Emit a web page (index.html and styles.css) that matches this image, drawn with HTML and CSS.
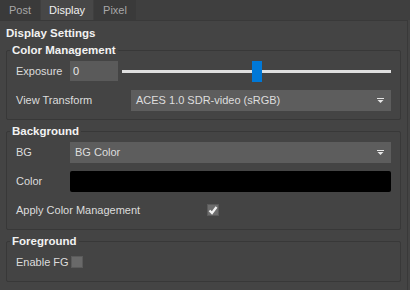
FILE: index.html
```html
<!DOCTYPE html>
<html lang="en">
<head>
    <meta charset="UTF-8">
    <meta name="viewport" content="width=device-width, initial-scale=1.0">
    <title>Display Settings</title>
    <link rel="stylesheet" href="styles.css">
</head>
<body>

<div class="tabs">
    <div class="tab">Post</div>
    <div class="tab active">Display</div>
    <div class="tab">Pixel</div>
</div>

<div class="panel">
    <div class="heading">Display Settings</div>

    <fieldset class="group">
        <legend>Color Management</legend>
        <div class="row">
            <label class="lbl-short">Exposure</label>
            <input class="num" type="text" value="0">
            <div class="slider">
                <div class="track"></div>
                <div class="handle" style="left: calc(50% - 5px);"></div>
            </div>
        </div>
        <div class="row">
            <label class="lbl-wide">View Transform</label>
            <div class="combo">
                <span>ACES 1.0 SDR-video (sRGB)</span>
                <svg class="arrow" width="7" height="5" viewBox="0 0 7 5">
                    <rect x="0" y="0" width="7" height="1" fill="#e6e6e6"/>
                    <polygon points="0.5,2 6.5,2 3.5,5" fill="#e6e6e6"/>
                </svg>
            </div>
        </div>
    </fieldset>

    <fieldset class="group">
        <legend>Background</legend>
        <div class="row">
            <label class="lbl-short">BG</label>
            <div class="combo">
                <span>BG Color</span>
                <svg class="arrow" width="7" height="5" viewBox="0 0 7 5">
                    <rect x="0" y="0" width="7" height="1" fill="#e6e6e6"/>
                    <polygon points="0.5,2 6.5,2 3.5,5" fill="#e6e6e6"/>
                </svg>
            </div>
        </div>
        <div class="row">
            <label class="lbl-short">Color</label>
            <div class="swatch"></div>
        </div>
        <div class="row">
            <label class="lbl-check">Apply Color Management</label>
            <div class="check checked">
                <svg width="10" height="10" viewBox="0 0 10 10">
                    <polyline points="1.5,5.5 4,8 8.5,2" fill="none" stroke="#f2f2f2" stroke-width="2.2"/>
                </svg>
            </div>
        </div>
    </fieldset>

    <fieldset class="group">
        <legend>Foreground</legend>
        <div class="row">
            <label class="lbl-fg">Enable FG</label>
            <div class="check"></div>
        </div>
    </fieldset>
</div>

</body>
</html>
```

FILE: styles.css
```css
body {
    margin: 0;
    width: 410px;
    height: 290px;
    overflow: hidden;
    background-color: #444444;
    color: #dcdcdc;
    font-family: "Liberation Sans", Arial, sans-serif;
    font-size: 11px;
}
.tabs {
    display: flex;
    height: 20px;
    background-color: #3f3f3f;
}
.tab {
    padding: 0 9px;
    margin-right: 1px;
    line-height: 20px;
    background-color: #3a3a3a;
    color: #a8a8a8;
}
.tab.active {
    padding: 0 8px;
    background-color: #474747;
    color: #f0f0f0;
}
.panel {
    margin-right: 2px;
    height: 268px;
    padding: 5px 6px 0 6px;
    border-top: 1px solid #393939;
    border-right: 1px solid #393939;
}
.heading {
    font-weight: bold;
    font-size: 11.5px;
    line-height: 14px;
    color: #f2f2f2;
}
.group {
    margin: 3px 0 0 0;
    padding: 4px 9px 9px 9px;
    border: 1px solid #383838;
    border-radius: 2px;
    display: flex;
    flex-direction: column;
    gap: 9px;
}
.group + .group {
    margin-top: 4px;
}
.group legend {
    margin-left: -6px;
    padding: 0 2px;
    font-weight: bold;
    font-size: 11.5px;
    line-height: 14px;
    color: #f2f2f2;
}
.row {
    display: flex;
    align-items: center;
    height: 20px;
}
.lbl-short {
    width: 54px;
    flex: none;
}
.lbl-wide {
    width: 115px;
    flex: none;
}
.lbl-check {
    width: 191px;
    flex: none;
}
.lbl-fg {
    width: 55px;
    flex: none;
}
.num {
    width: 48px;
    height: 20px;
    box-sizing: border-box;
    margin: 0 4px 0 0;
    padding: 0 3px;
    border: none;
    background-color: #5a5a5a;
    color: #e8e8e8;
    font: inherit;
}
.slider {
    position: relative;
    flex: 1;
    height: 21px;
    display: flex;
    align-items: center;
}
.track {
    width: 100%;
    height: 3px;
    background-color: #e0e0e0;
}
.handle {
    position: absolute;
    top: 0;
    width: 10px;
    height: 21px;
    background-color: #0078d7;
}
.combo {
    flex: 1;
    height: 21px;
    padding: 0 7px 0 5px;
    display: flex;
    align-items: center;
    justify-content: space-between;
    background-color: #5d5d5d;
    color: #dedede;
}
.swatch {
    flex: 1;
    height: 21px;
    background-color: #000;
    border-radius: 2px;
}
.check {
    width: 12px;
    height: 12px;
    box-sizing: border-box;
    border: 1px solid #5a5a5a;
    background-color: #696969;
    display: flex;
    align-items: center;
    justify-content: center;
}
.check.checked {
    background-color: #6d6d6d;
}
```
